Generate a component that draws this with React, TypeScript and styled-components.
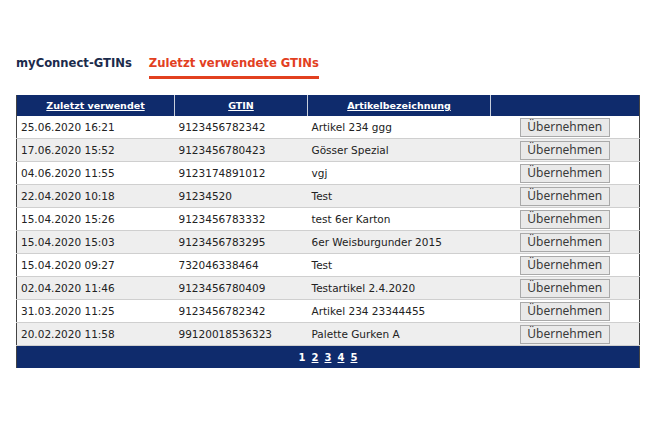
import React from 'react'
import styled, { createGlobalStyle } from 'styled-components'

const GlobalStyle = createGlobalStyle`
  html, body {
    margin: 0;
    padding: 0;
    background: #ffffff;
  }
  body {
    font-family: "DejaVu Sans", Verdana, sans-serif;
  }
`

const rows = [
  { used: '25.06.2020 16:21', gtin: '9123456782342', name: 'Artikel 234 ggg' },
  { used: '17.06.2020 15:52', gtin: '9123456780423', name: 'Gösser Spezial' },
  { used: '04.06.2020 11:55', gtin: '9123174891012', name: 'vgj' },
  { used: '22.04.2020 10:18', gtin: '91234520', name: 'Test' },
  { used: '15.04.2020 15:26', gtin: '9123456783332', name: 'test 6er Karton' },
  { used: '15.04.2020 15:03', gtin: '9123456783295', name: '6er Weisburgunder 2015' },
  { used: '15.04.2020 09:27', gtin: '732046338464', name: 'Test' },
  { used: '02.04.2020 11:46', gtin: '9123456780409', name: 'Testartikel 2.4.2020' },
  { used: '31.03.2020 11:25', gtin: '9123456782342', name: 'Artikel 234 23344455' },
  { used: '20.02.2020 11:58', gtin: '99120018536323', name: 'Palette Gurken A' },
]

const App: React.FC = () => {
  return (
    <Page>
      <GlobalStyle />
      <Tabs>
        <Tab>myConnect-GTINs</Tab>
        <Tab active>Zuletzt verwendete GTINs</Tab>
      </Tabs>
      <Table>
        <colgroup>
          <col style={{ width: 158 }} />
          <col style={{ width: 133 }} />
          <col style={{ width: 183 }} />
          <col />
        </colgroup>
        <thead>
          <tr>
            <HeadCell><HeadLink>Zuletzt verwendet</HeadLink></HeadCell>
            <HeadCell><HeadLink>GTIN</HeadLink></HeadCell>
            <HeadCell><HeadLink>Artikelbezeichnung</HeadLink></HeadCell>
            <HeadCell />
          </tr>
        </thead>
        <tbody>
          {rows.map((r, i) => (
            <Row key={i} odd={i % 2 === 1}>
              <Cell>{r.used}</Cell>
              <Cell>{r.gtin}</Cell>
              <Cell>{r.name}</Cell>
              <ButtonCell>
                <TakeButton>Übernehmen</TakeButton>
              </ButtonCell>
            </Row>
          ))}
        </tbody>
        <tfoot>
          <tr>
            <Footer colSpan={4}>
              <Pager>
                <PageNum current>1</PageNum>
                <PageNum>2</PageNum>
                <PageNum>3</PageNum>
                <PageNum>4</PageNum>
                <PageNum>5</PageNum>
              </Pager>
            </Footer>
          </tr>
        </tfoot>
      </Table>
    </Page>
  )
}

// Styled components
const Page = styled.div`
  padding: 53px 20px 0 16px;
`

const Tabs = styled.div`
  display: flex;
  gap: 17px;
  margin-bottom: 16px;
`

const Tab = styled.div<{ active?: boolean }>`
  font-size: 11.6px;
  font-weight: bold;
  color: ${(p) => (p.active ? '#e2401f' : '#1b2b4c')};
  padding: 3px 0 6px;
  border-bottom: 3px solid ${(p) => (p.active ? '#e2401f' : 'transparent')};
`

const Table = styled.table`
  width: 624px;
  border-collapse: collapse;
  table-layout: fixed;
  font-size: 10.5px;
  color: #222;
  border-left: 1px solid #444;
  border-right: 1px solid #444;
`

const HeadCell = styled.th`
  background: #0f2b6c;
  color: #ffffff;
  height: 21px;
  padding: 0;
  font-size: 9.5px;
  font-weight: bold;
  text-align: center;
  border-right: 1px solid #c8cfdc;

  &:last-child {
    border-right: none;
  }
`

const HeadLink = styled.span`
  text-decoration: underline;
`

const Row = styled.tr<{ odd: boolean }>`
  background: ${(p) => (p.odd ? '#eeeeee' : '#ffffff')};
  border-bottom: 1px solid #cfcfcf;
`

const Cell = styled.td`
  height: 22px;
  padding: 0 0 0 4px;
  white-space: nowrap;
  overflow: hidden;
`

const ButtonCell = styled.td`
  padding: 0;
  text-align: center;
`

const TakeButton = styled.button`
  font-family: "Noto Sans", "Open Sans", sans-serif;
  font-size: 12px;
  line-height: 1;
  color: #3a3a3a;
  width: 90px;
  height: 19px;
  padding: 0;
  background: #e9e9e9;
  border: 1px solid #a9a9a9;
  border-radius: 0;
  cursor: pointer;
`

const Footer = styled.td`
  background: #0f2b6c;
  height: 22px;
  padding: 0;
  text-align: center;
`

const Pager = styled.div`
  display: inline-flex;
  gap: 6px;
  color: #ffffff;
  font-weight: bold;
  font-size: 10px;
`

const PageNum = styled.span<{ current?: boolean }>`
  text-decoration: ${(p) => (p.current ? 'none' : 'underline')};
  cursor: pointer;
`

export default App
